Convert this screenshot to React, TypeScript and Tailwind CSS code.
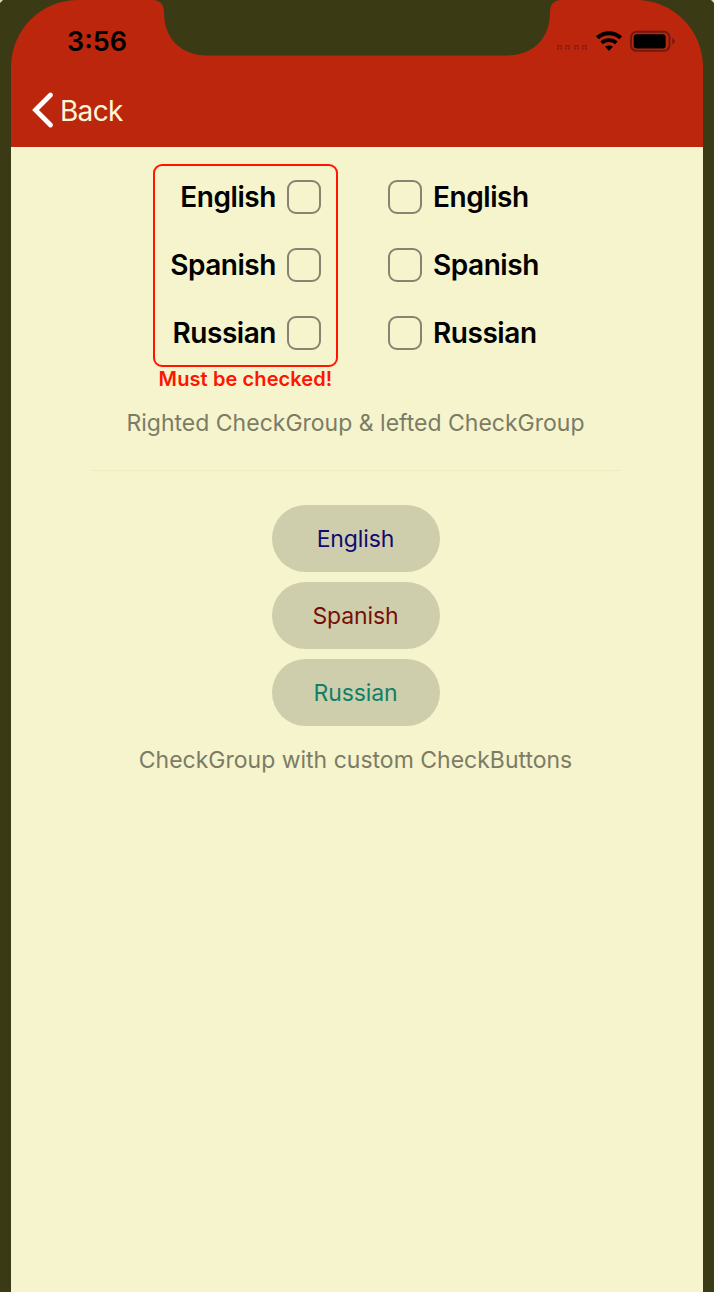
import React from "react";

type Side = "left" | "right";

const languages = ["English", "Spanish", "Russian"];

function CheckRow({ label, side }: { label: string; side: Side }) {
  const box = <span className="size-[34px] shrink-0 rounded-[9px] border-2 border-[#848470]" />;
  return (
    <div className="flex h-[34px] items-center gap-[11px]">
      {side === "left" && box}
      <span className="text-[28px] leading-[34px] font-semibold tracking-[-0.45px]">{label}</span>
      {side === "right" && box}
    </div>
  );
}

function StatusIcons() {
  return (
    <svg width="122" height="28" viewBox="0 0 122 28" fill="#000">
      <g fill="#8a1c10">
        {[4, 12, 21, 29].map((x) => (
          <g key={x}>
            <rect x={x} y="18" width="5" height="1.5" />
            <rect x={x} y="20.5" width="2" height="2" />
            <rect x={x + 3} y="20.5" width="2" height="2" />
          </g>
        ))}
      </g>
      <g fill="none" stroke="#000">
        <path d="M44.3 10.8C51 4.6 61 4.6 67.7 10.8" strokeWidth="4" />
        <path d="M48.6 15.9C52.8 12.2 59.2 12.2 63.4 15.9" strokeWidth="3.8" />
      </g>
      <path d="M52 19.6C54.5 18 57.5 18 60 19.6L56 24Z" />
      <rect x="78" y="4.8" width="38.5" height="19" rx="5.5" fill="none" stroke="#6f1a10" strokeWidth="2" />
      <rect x="80.7" y="7.3" width="32" height="14.3" rx="3" />
      <path d="M119.3 11C122.5 12.5 122.5 16 119.3 17.5Z" fill="#6f1a10" />
    </svg>
  );
}

export default function App() {
  return (
    <div className="relative h-[1292px] w-[714px] overflow-hidden bg-[#3a3a14] px-[11px] font-[Inter,sans-serif] text-black">
      <div className="flex h-full flex-col">
        <header className="h-[147px] shrink-0 rounded-t-[67px] bg-[#bb260d]">
          <div className="flex h-[84px] items-start justify-between pr-[28px] pl-[56px]">
            <span className="mt-[25px] text-[27px] leading-[34px] font-semibold">3:56</span>
            <div className="mt-[27px]">
              <StatusIcons />
            </div>
          </div>
          <div className="flex items-center pl-[20px] text-[#fff6d8]">
            <svg width="24" height="40" viewBox="0 0 24 40" fill="none" stroke="#fff" strokeWidth="4.8" strokeLinecap="round" strokeLinejoin="miter" className="mt-[6px]">
              <path d="M19.5 5L4.5 20L19.5 35" />
            </svg>
            <span className="mt-[7px] ml-[5px] text-[28px] leading-[34px] tracking-[-0.7px]">Back</span>
          </div>
        </header>
        <main className="flex grow flex-col items-center bg-[#f5f4cd] pr-[3px]">
          <div className="mt-[17px] ml-[142px] flex h-[203px] w-[409px] justify-between self-start">
            <div className="flex w-[185px] flex-col items-end gap-[34px] rounded-[9px] border-2 border-[#ff1500] pt-[14px] pr-[15px]">
              {languages.map((label) => (
                <CheckRow key={label} label={label} side="right" />
              ))}
            </div>
            <div className="flex w-[174px] flex-col gap-[34px] pt-[16px]">
              {languages.map((label) => (
                <CheckRow key={label} label={label} side="left" />
              ))}
            </div>
          </div>
          <p className="ml-[142px] w-[185px] self-start text-center text-[20px] leading-[25px] font-semibold tracking-[0.1px] whitespace-nowrap text-[#ff1500]">
            Must be checked!
          </p>
          <p className="mt-[17px] text-[23px] leading-[28px] text-[#7c7b66]">Righted CheckGroup &amp; lefted CheckGroup</p>
          <div className="mt-[33px] h-px w-[532px] bg-[#efedbd]" />
          <div className="mt-[34px] flex flex-col gap-[10px]">
            {[
              ["English", "text-[#100a72]"],
              ["Spanish", "text-[#760f04]"],
              ["Russian", "text-[#108068]"],
            ].map(([label, color]) => (
              <button key={label} className={`flex h-[67px] w-[168px] items-center justify-center rounded-full bg-[#cfceac] pt-[1px] text-[23px] tracking-[-0.1px] ${color}`}>
                {label}
              </button>
            ))}
          </div>
          <p className="mt-[20px] text-[23px] leading-[28px] text-[#7c7b66]">CheckGroup with custom CheckButtons</p>
        </main>
      </div>
      <svg className="absolute top-0 left-0" width="714" height="60" viewBox="0 0 714 60">
        <path d="M154 0C161 1 164 5 164 12C164 38 180 55.5 208 55.5H506C534 55.5 550 38 550 12C550 5 553 1 560 0Z" fill="#3a3a14" />
        <path d="M0 0H3L0 3ZM714 0H711L714 3Z" fill="#d8d8b8" />
      </svg>
    </div>
  );
}
